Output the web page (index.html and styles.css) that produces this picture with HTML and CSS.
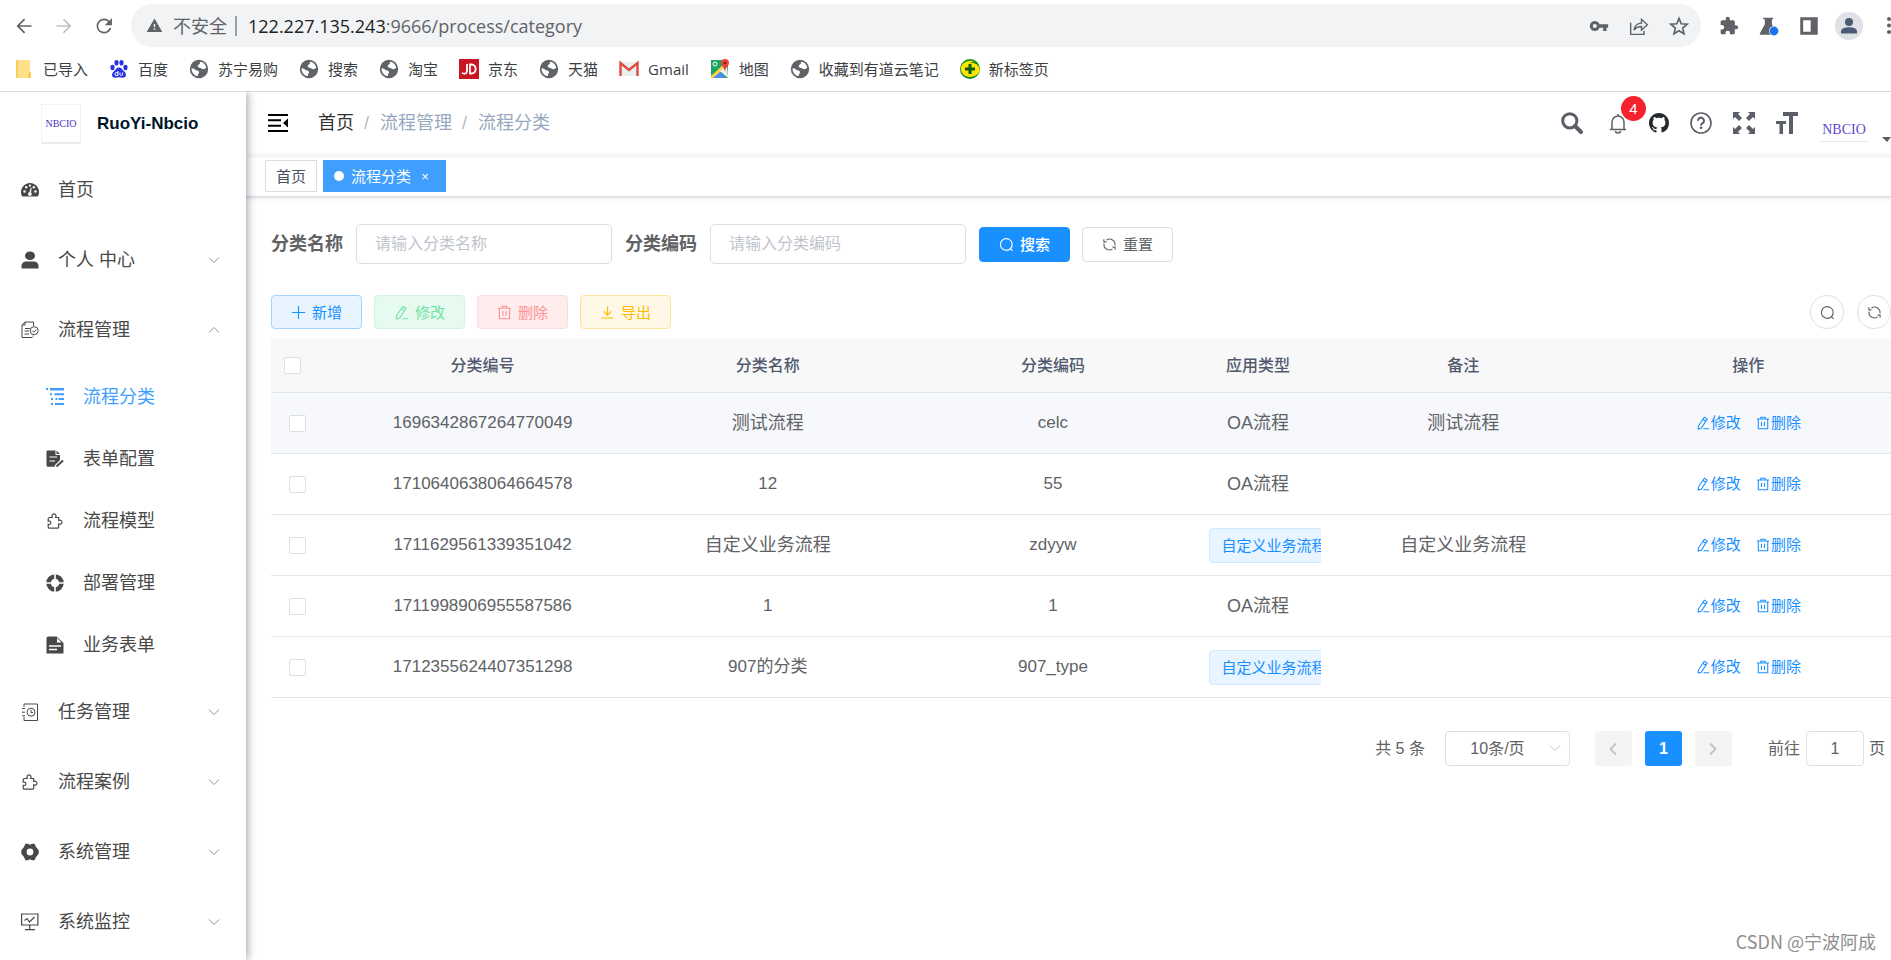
FILE: index.html
```html
<!DOCTYPE html>
<html lang="zh-CN">
<head>
<meta charset="utf-8">
<title>流程分类 - RuoYi-Nbcio</title>
<link rel="stylesheet" href="styles.css">
</head>
<body>
<svg class="sprite" aria-hidden="true">
  <symbol id="i-back" viewBox="0 0 24 24"><path fill="currentColor" d="M21 11H6.8l6.6-6.6L12 3l-9 9 9 9 1.4-1.4L6.800 13H21z"/></symbol>
  <symbol id="i-forward" viewBox="0 0 24 24"><path fill="currentColor" d="M3 11h14.200l-6.600-6.600L12 3l9 9-9 9-1.400-1.400 6.600-6.600H3z"/></symbol>
  <symbol id="i-reload" viewBox="0 0 24 24"><path fill="currentColor" d="M18.400 5.600A9 9 0 1 0 20.800 14.500h-2.200A7 7 0 1 1 17 7l-4 4h8.500V2.500z"/></symbol>
  <symbol id="i-warn" viewBox="0 0 24 24"><path fill="currentColor" d="M1 21h22L12 2zm12-3h-2v-2h2zm0-4h-2v-4h2z"/></symbol>
  <symbol id="i-key" viewBox="0 0 24 24"><path fill="currentColor" d="M12.650 10C11.830 7.670 9.610 6 7 6c-3.310 0-6 2.690-6 6s2.690 6 6 6c2.610 0 4.830-1.670 5.650-4H17v4h4v-4h2v-4zM7 14.500a2.500 2.500 0 1 1 0-5 2.500 2.500 0 0 1 0 5z"/></symbol>
  <symbol id="i-share" viewBox="0 0 24 24"><g fill="none" stroke="currentColor" stroke-width="1.700"><path d="M2 8v14h16v-4"/><path d="M6 17c1-6 4-8.500 9-8.500V4l7 6.500-7 6.500v-4.500c-4 0-6.500 1-9 4.500z"/></g></symbol>
  <symbol id="i-star" viewBox="0 0 24 24"><path fill="none" stroke="currentColor" stroke-width="2" d="M12 2.800l2.700 6.500 7 .6-5.300 4.600 1.600 6.800-6-3.600-6 3.600 1.600-6.800L2.300 9.900l7-.6z"/></symbol>
  <symbol id="i-ext" viewBox="0 0 24 24"><path fill="currentColor" d="M20.500 11H19V7c0-1.100-.9-2-2-2h-4V3.500a2.500 2.500 0 0 0-5 0V5H4c-1.100 0-2 .9-2 2v3.800h1.500a2.700 2.700 0 0 1 0 5.400H2V20c0 1.100.9 2 2 2h3.800v-1.500a2.700 2.700 0 0 1 5.400 0V22H17c1.100 0 2-.9 2-2v-4h1.500a2.500 2.500 0 0 0 0-5z"/></symbol>
  <symbol id="i-flask" viewBox="0 0 24 24"><path fill="currentColor" d="M5 2h12v2h-1.500v6L22 21v1.500H1V21L7 10V4H5z"/><circle cx="18" cy="18" r="6" fill="#fff"/><circle cx="18" cy="18" r="5.300" fill="#1a73e8"/></symbol>
  <symbol id="i-panel" viewBox="0 0 24 24"><path fill="currentColor" fill-rule="evenodd" d="M1.500 1.500h21v21h-21zM5 5v14h9V5z"/></symbol>
  <symbol id="i-globe" viewBox="0 0 24 24"><circle cx="12" cy="12" r="11" fill="#5f6368"/><path fill="#fff" d="M3 11c3 0 4 1 5 2.500 2 0 4 .5 4 2.500 0 1.500-1.500 2-1.500 4.500C6 20 3 16 3 11zM13 3.200c4 .2 7 3.300 7.700 7.300-1.500 1.500-3 2-5 1.500-1-2-4-1-5-2.500-1-2 1-2.500 2-3.500s0-1.500.3-2.800z"/></symbol>

  <symbol id="i-fold" viewBox="0 0 20 18"><path fill="currentColor" d="M0 0h20v2H0zM0 5.300h13v2H0zM0 10.700h13v2H0zM0 16h20v2H0zM20 4.500v9L15 9z"/></symbol>
  <symbol id="i-mag" viewBox="0 0 22 22"><circle cx="8.800" cy="8.800" r="7.100" fill="none" stroke="currentColor" stroke-width="3"/><path d="M14 14l6 6" stroke="currentColor" stroke-width="4" stroke-linecap="round"/></symbol>
  <symbol id="i-bell" viewBox="0 0 20 22"><path fill="none" stroke="currentColor" stroke-width="1.500" d="M2 17.500h16M4 17.500V10a6 6 0 0 1 12 0v7.500M10 4V2M7.500 19a2.500 2 0 0 0 5 0"/></symbol>
  <symbol id="i-github" viewBox="0 0 16 16"><path fill="currentColor" d="M8 0C3.580 0 0 3.580 0 8c0 3.540 2.290 6.530 5.470 7.590.4.070.55-.17.55-.38 0-.19-.01-.82-.01-1.490-2.010.370-2.530-.49-2.690-.94-.09-.23-.48-.94-.82-1.130-.28-.15-.68-.52-.01-.53.63-.01 1.080.58 1.230.82.72 1.210 1.870.87 2.330.66.070-.52.28-.87.51-1.070-1.780-.2-3.640-.89-3.640-3.950 0-.87.31-1.590.82-2.150-.08-.2-.36-1.020.08-2.120 0 0 .67-.21 2.200.82.64-.18 1.320-.27 2-.27s1.360.09 2 .27c1.530-1.040 2.200-.82 2.200-.82.44 1.100.16 1.920.08 2.120.51.560.82 1.270.82 2.150 0 3.070-1.870 3.750-3.650 3.950.29.250.54.730.54 1.480 0 1.070-.01 1.930-.01 2.200 0 .21.15.46.55.38A8 8 0 0 0 16 8c0-4.420-3.580-8-8-8z"/></symbol>
  <symbol id="i-help" viewBox="0 0 22 22"><g fill="none" stroke="currentColor" stroke-width="1.600"><circle cx="11" cy="11" r="10"/><path stroke-width="2" d="M8 8.700a3 3 0 1 1 4.600 2.500c-1.100.7-1.600 1.200-1.600 2.300"/></g><circle cx="11" cy="15.800" r="1.300" fill="currentColor"/></symbol>
  <symbol id="i-full" viewBox="0 0 22 22"><path fill="currentColor" d="M0 0h7L5 2l4 4-3 3-4-4-2 2zM22 0v7l-2-2-4 4-3-3 4-4-2-2zM0 22v-7l2 2 4-4 3 3-4 4 2 2zM22 22h-7l2-2-4-4 3-3 4 4 2-2z"/></symbol>
  <symbol id="i-size" viewBox="0 0 22 22"><path fill="currentColor" d="M7 0h15v4h-5v18h-4V4H7zM0 9h10v3H7v10H3.500V12H0z"/></symbol>

  <symbol id="i-dash" viewBox="0 0 18 18"><path fill="currentColor" d="M9 2a9 9 0 0 0-8.800 11c.3 1.500.7 2.300 1.500 2.500h14.600c.8-.2 1.200-1 1.500-2.500A9 9 0 0 0 9 2z"/><g fill="#fff"><circle cx="3.500" cy="10.500" r="1.200"/><circle cx="5.200" cy="6.300" r="1.200"/><circle cx="9" cy="4.700" r="1.100"/><circle cx="12.800" cy="6.300" r="1.200"/><circle cx="14.500" cy="10.500" r="1.200"/><path d="M9.700 6.800l1 .3-.7 4.500a1.800 1.800 0 1 1-1.500-.3z"/></g></symbol>
  <symbol id="i-user" viewBox="0 0 18 18"><path fill="currentColor" d="M9 .5c3 0 5 1.800 5 4.200S12 9 9 9 4 7.100 4 4.700 6 .5 9 .5zM.5 17.500v-2.500c0-2.500 2-4.500 4.500-4.500h8c2.500 0 4.500 2 4.500 4.500v2.500z"/></symbol>
  <symbol id="i-flow" viewBox="0 0 18 18"><g fill="none" stroke="currentColor"><path d="M12.500 5V1H4L1 4v12.500h10.500M1 4h3V1M4 7.500h5M3.500 10h4.500M3.500 13h4.500"/><circle cx="13.200" cy="9.700" r="4"/><path d="M11.300 9.700l1.500 1.500 2.500-2.700M12 14.500v1"/></g></symbol>
  <symbol id="i-tree" viewBox="0 0 18 18"><path fill="currentColor" d="M0 0h2v2H0zM4 0h14v2.500H4zM4 5.200h2v2H4zM8.500 5.200H18v2H8.500zM5 10h2v2H5zM9.500 10h1.800v2H9.500zM12.500 10H18v2h-5.500zM5 15h2v2H5zM9 15h9v2H9z"/></symbol>
  <symbol id="i-form" viewBox="0 0 18 18"><path fill="currentColor" d="M1.500.5h8V5h4.500v5l-5 5-.5 1.800H2.500c-1.300 0-2-.6-2-1.800V2C.5 1 .8.500 1.500.500zM10.500.5L14 4h-3.500z"/><path stroke="#fff" stroke-width="1.200" d="M3.500 7h7.500M3.500 11h5.500"/><path stroke="currentColor" stroke-width="2" d="M10.500 16.500L17 10.500"/></symbol>
  <symbol id="i-puzzle" viewBox="0 0 18 18"><path fill="none" stroke="currentColor" stroke-width="1.200" d="M3.500 5.500h2.800c-.8-1.500 0-3.700 1.700-3.700s2.500 2.200 1.700 3.700h3v3c1.400-.7 3.300 0 3.300 1.700s-1.900 2.400-3.300 1.700v3c0 .8-.5 1.300-1.300 1.300H3.500c-.8 0-1.300-.5-1.300-1.300v-2.500c1.500.4 2.600-.5 2.600-1.700s-1.100-2-2.600-1.600V6.800c0-.8.5-1.300 1.300-1.300z"/></symbol>
  <symbol id="i-ring" viewBox="0 0 18 18"><circle cx="9" cy="9" r="6.500" fill="none" stroke="currentColor" stroke-width="4.500"/><path stroke="#fff" stroke-width="1.600" d="M9 0v5M9 13v5M0 9h5M13 9h5"/></symbol>
  <symbol id="i-doc" viewBox="0 0 18 18"><path fill="currentColor" d="M2.500.5h8L17.500 7v10.500H.5v-15c0-1.200.8-2 2-2z"/><path fill="#fff" d="M11 2v4.500h4.500z"/><path stroke="#fff" stroke-width="1.500" d="M3 10h12M3 13.500h8"/></symbol>
  <symbol id="i-task" viewBox="0 0 18 18"><g fill="none" stroke="currentColor"><path d="M3 4V1h13.500v16.500H3V14M1 5.500h3M1 9.200h3M1 12.800h3"/><circle cx="10" cy="9.200" r="4"/><path d="M10 7v2.500h2"/></g></symbol>
  <symbol id="i-gear" viewBox="0 0 18 18"><path fill="currentColor" fill-rule="evenodd" d="M4.500.8h2.200L9 1.800l2.300-1h2.200l1.700 3.400 2.500 3v3.600l-2.500 3-1.700 3.400h-2.200l-2.300-1-2.300 1H4.500l-1.700-3.400-2.500-3V7.200l2.500-3zM9 5.600a3.400 3.400 0 1 0 0 6.800 3.400 3.400 0 0 0 0-6.800z"/></symbol>
  <symbol id="i-monitor" viewBox="0 0 18 18"><path fill="none" stroke="currentColor" stroke-width="1.200" d="M.6 1h16.300v11H.6zM8.700 12v4.500M4 16.700h10M3.500 7.500l2.500-2 2.500 3.500 5-5"/></symbol>
  <symbol id="i-down" viewBox="0 0 12 12"><path fill="none" stroke="currentColor" d="M1 3.500l5 5 5-5"/></symbol>
  <symbol id="i-up" viewBox="0 0 12 12"><path fill="none" stroke="currentColor" d="M1 8.500l5-5 5 5"/></symbol>

  <symbol id="i-search" viewBox="0 0 16 16"><path fill="none" stroke="currentColor" stroke-width="1.200" d="M12.200 12.500A6.300 6.300 0 1 0 8 14.300c1.700 0 3.200-.6 4.200-1.800zM12.200 12.500l2.300 2.300"/></symbol>
  <symbol id="i-refresh" viewBox="0 0 16 16"><g fill="none" stroke="currentColor" stroke-width="1.200"><path d="M4.800 3.200A5.800 5.800 0 0 1 13.800 9M11.200 12.800A5.800 5.800 0 0 1 2.200 7"/><path d="M4.800 5.200H2V2.500M11.200 10.800H14v2.700"/></g></symbol>
  <symbol id="i-plus" viewBox="0 0 16 16"><path stroke="currentColor" stroke-width="1.200" d="M8 1v14M1 8h14"/></symbol>
  <symbol id="i-edit" viewBox="0 0 16 16"><path fill="none" stroke="currentColor" stroke-width="1.200" d="M9.500 1.500l3.300 2L6 14l-3.500 1 .2-3.500zM8 4l3.300 2M8.500 14.600H15"/></symbol>
  <symbol id="i-trash" viewBox="0 0 16 16"><path fill="none" stroke="currentColor" stroke-width="1.200" d="M1 3.500h14M5.500 3.500v-2h5v2M2.600 3.500v11.100h10.800V3.500M6.300 6.500v5M9.700 6.500v5"/></symbol>
  <symbol id="i-export" viewBox="0 0 16 16"><path fill="none" stroke="currentColor" stroke-width="1.200" d="M8 1.500v9M4 6.800l4 4 4-4M1.500 13.800h13"/></symbol>
  <symbol id="i-left" viewBox="0 0 12 16"><path fill="none" stroke="currentColor" stroke-width="2" d="M9 2.500L3.500 8 9 13.500"/></symbol>
  <symbol id="i-right" viewBox="0 0 12 16"><path fill="none" stroke="currentColor" stroke-width="2" d="M3 2.500L8.500 8 3 13.500"/></symbol>
</svg>

<header class="browser">
  <div class="toolbar">
    <button class="tool" aria-label="后退"><svg><use href="#i-back"/></svg></button>
    <button class="tool tool-off" aria-label="前进"><svg><use href="#i-forward"/></svg></button>
    <button class="tool" aria-label="刷新"><svg><use href="#i-reload"/></svg></button>
    <div class="omnibox">
      <svg class="warn"><use href="#i-warn"/></svg>
      <span class="insecure">不安全</span>
      <span class="sep"></span>
      <span class="url"><b>122.227.135.243</b>:9666/process/category</span>
      <button class="tool" aria-label="密码"><svg><use href="#i-key"/></svg></button>
      <button class="tool" aria-label="分享"><svg><use href="#i-share"/></svg></button>
      <button class="tool" aria-label="收藏"><svg><use href="#i-star"/></svg></button>
    </div>
    <div class="tools">
      <button class="tool" aria-label="扩展程序"><svg><use href="#i-ext"/></svg></button>
      <button class="tool" aria-label="实验"><svg><use href="#i-flask"/></svg></button>
      <button class="tool" aria-label="侧边栏"><svg><use href="#i-panel"/></svg></button>
    </div>
    <button class="profile" aria-label="个人资料"><svg viewBox="0 0 28 28"><circle cx="14" cy="14" r="14" fill="#dee1e6"/><circle cx="14" cy="10" r="4" fill="#4a5a73"/><path fill="#4a5a73" d="M6 21.500v-2c0-3 4-4.300 8-4.300s8 1.300 8 4.300v2z"/></svg></button>
    <button class="more" aria-label="更多"><svg viewBox="0 0 6 18"><g fill="#5f6368"><circle cx="4" cy="2" r="2"/><circle cx="4" cy="8.500" r="2"/><circle cx="4" cy="15" r="2"/></g></svg></button>
  </div>
  <nav class="bookmarks" aria-label="书签">
    <a href="#"><svg viewBox="0 0 20 20"><path fill="#ffe08a" d="M2 1h14v18H2z"/><path fill="#f8cf5c" d="M2 1h2v18H2zM14 13h3v6h-3z"/></svg>已导入</a>
    <a href="#"><svg viewBox="0 0 20 20"><g fill="#2932e1"><ellipse cx="3.500" cy="8.500" rx="2.100" ry="2.700"/><ellipse cx="7.500" cy="3.800" rx="2.100" ry="2.800"/><ellipse cx="12.500" cy="3.800" rx="2.100" ry="2.800"/><ellipse cx="16.500" cy="8.500" rx="2.100" ry="2.700"/><path d="M10 8.500c2.500 0 3 2 5 3.800s2.500 3.500 1.500 5.200c-1.500 2-4 .8-6.500.8s-5 1.200-6.500-.8c-1-1.700-.5-3.400 1.500-5.200s2.500-3.800 5-3.800z"/></g><path fill="none" stroke="#fff" d="M9 12v4.500H7.200c-1.800 0-1.800-2.800 0-2.800H9M11 13.500v2.200c0 1 2.500 1 2.500 0v-2.200"/></svg>百度</a>
    <a href="#"><svg><use href="#i-globe"/></svg>苏宁易购</a>
    <a href="#"><svg><use href="#i-globe"/></svg>搜索</a>
    <a href="#"><svg><use href="#i-globe"/></svg>淘宝</a>
    <a href="#"><svg viewBox="0 0 20 20"><path fill="#c91623" d="M0 0h20v20H0z"/><path fill="none" stroke="#fff" stroke-width="1.800" d="M3 14c3 1.500 5 .5 5-2V5M11 5.500h1.500c5.500 0 5.500 9 0 9H11z"/></svg>京东</a>
    <a href="#"><svg><use href="#i-globe"/></svg>天猫</a>
    <a href="#"><svg viewBox="0 0 20 20"><path fill="#eceff1" d="M1 3h18v14H1z"/><path fill="none" stroke="#e04a3f" stroke-width="2.400" d="M1.500 17V4l8.500 7 8.500-7v13"/></svg>Gmail</a>
    <a href="#"><svg viewBox="0 0 20 20"><path fill="#1fa463" d="M1 1h17v18H1z"/><path fill="#ffd04b" d="M1 17L14 5l3 3L4 19H1z"/><path fill="#f2f2f2" d="M10 12l7-6 1 13z"/><path fill="#4c8bf5" d="M3 19l7-6 6 6z"/><path fill="#ea4335" d="M15 0a4 4 0 0 1 4 4c0 3-3.500 4-4 9-.5-5-4-6-4-9a4 4 0 0 1 4-4z"/><circle cx="15" cy="4" r="1.300" fill="#7b1a12"/><circle cx="5" cy="5" r="2" fill="none" stroke="#fff"/></svg>地图</a>
    <a href="#"><svg><use href="#i-globe"/></svg>收藏到有道云笔记</a>
    <a href="#"><svg viewBox="0 0 20 20"><circle cx="10" cy="10" r="10" fill="#128a1c"/><path fill="#ffe500" d="M1 8C3 3 9 .5 15 2.500c-3 0-4 .5-5 1.500 5-1 10 3 9.800 7.500C19 15 15 18 10 18 5 18 0 14 1 8z"/><path stroke="#0b5c12" stroke-width="3" d="M10 5v10M5 10h10"/></svg>新标签页</a>
  </nav>
</header>

<div class="app">
  <aside class="sidebar">
    <a class="brand" href="#"><span class="brand-logo">NBCIO</span><span class="brand-name">RuoYi-Nbcio</span></a>
    <ul class="menu">
      <li><a class="item" href="#"><svg><use href="#i-dash"/></svg>首页</a></li>
      <li><button class="item"><svg><use href="#i-user"/></svg>个人 中心<svg class="arrow"><use href="#i-down"/></svg></button></li>
      <li><button class="item"><svg><use href="#i-flow"/></svg>流程管理<svg class="arrow"><use href="#i-up"/></svg></button>
        <ul class="submenu">
          <li><a class="item active" href="#"><svg><use href="#i-tree"/></svg>流程分类</a></li>
          <li><a class="item" href="#"><svg><use href="#i-form"/></svg>表单配置</a></li>
          <li><a class="item" href="#"><svg><use href="#i-puzzle"/></svg>流程模型</a></li>
          <li><a class="item" href="#"><svg><use href="#i-ring"/></svg>部署管理</a></li>
          <li><a class="item" href="#"><svg><use href="#i-doc"/></svg>业务表单</a></li>
        </ul>
      </li>
      <li><button class="item"><svg><use href="#i-task"/></svg>任务管理<svg class="arrow"><use href="#i-down"/></svg></button></li>
      <li><button class="item"><svg><use href="#i-puzzle"/></svg>流程案例<svg class="arrow"><use href="#i-down"/></svg></button></li>
      <li><button class="item"><svg><use href="#i-gear"/></svg>系统管理<svg class="arrow"><use href="#i-down"/></svg></button></li>
      <li><button class="item"><svg><use href="#i-monitor"/></svg>系统监控<svg class="arrow"><use href="#i-down"/></svg></button></li>
    </ul>
  </aside>

  <div class="main">
    <div class="navbar">
      <button class="fold" aria-label="折叠菜单"><svg><use href="#i-fold"/></svg></button>
      <nav class="crumbs" aria-label="面包屑"><a href="#">首页</a><i>/</i><span>流程管理</span><i>/</i><span>流程分类</span></nav>
      <div class="nav-tools">
        <button aria-label="搜索"><svg><use href="#i-mag"/></svg></button>
        <button class="bell" aria-label="通知"><svg><use href="#i-bell"/></svg><span class="badge">4</span></button>
        <button class="github" aria-label="GitHub"><svg><use href="#i-github"/></svg></button>
        <button aria-label="帮助"><svg><use href="#i-help"/></svg></button>
        <button aria-label="全屏"><svg><use href="#i-full"/></svg></button>
        <button aria-label="布局大小"><svg><use href="#i-size"/></svg></button>
        <button class="account" aria-label="账户"><span class="avatar">NBCIO</span><span class="caret"></span></button>
      </div>
    </div>
    <div class="tags">
      <a class="tab" href="#">首页</a>
      <a class="tab tab-active" href="#"><span class="dot"></span>流程分类<span class="close">×</span></a>
    </div>

    <main class="content">
      <form class="query">
        <label for="name">分类名称</label>
        <input id="name" type="text" placeholder="请输入分类名称">
        <label for="code">分类编码</label>
        <input id="code" type="text" placeholder="请输入分类编码">
        <button type="button" class="btn btn-solid"><svg><use href="#i-search"/></svg>搜索</button>
        <button type="button" class="btn"><svg><use href="#i-refresh"/></svg>重置</button>
      </form>
      <div class="actions">
        <button class="btn btn-primary"><svg><use href="#i-plus"/></svg>新增</button>
        <button class="btn btn-success"><svg><use href="#i-edit"/></svg>修改</button>
        <button class="btn btn-danger"><svg><use href="#i-trash"/></svg>删除</button>
        <button class="btn btn-warning"><svg><use href="#i-export"/></svg>导出</button>
        <div class="rounds">
          <button class="round" aria-label="显示搜索"><svg><use href="#i-search"/></svg></button>
          <button class="round" aria-label="刷新"><svg><use href="#i-refresh"/></svg></button>
        </div>
      </div>
      <table class="grid">
        <colgroup><col class="c-check"><col><col><col><col class="c-type"><col><col></colgroup>
        <thead>
          <tr><th><input type="checkbox" aria-label="全选"></th><th>分类编号</th><th>分类名称</th><th>分类编码</th><th>应用类型</th><th>备注</th><th>操作</th></tr>
        </thead>
        <tbody>
          <tr class="hover"><td><input type="checkbox" aria-label="选择"></td><td class="num">1696342867264770049</td><td>测试流程</td><td class="num">celc</td><td>OA流程</td><td>测试流程</td><td><div class="ops"><button><svg><use href="#i-edit"/></svg>修改</button><button><svg><use href="#i-trash"/></svg>删除</button></div></td></tr>
          <tr><td><input type="checkbox" aria-label="选择"></td><td class="num">1710640638064664578</td><td class="num">12</td><td class="num">55</td><td>OA流程</td><td></td><td><div class="ops"><button><svg><use href="#i-edit"/></svg>修改</button><button><svg><use href="#i-trash"/></svg>删除</button></div></td></tr>
          <tr><td><input type="checkbox" aria-label="选择"></td><td class="num">1711629561339351042</td><td>自定义业务流程</td><td class="num">zdyyw</td><td><span class="pill">自定义业务流程</span></td><td>自定义业务流程</td><td><div class="ops"><button><svg><use href="#i-edit"/></svg>修改</button><button><svg><use href="#i-trash"/></svg>删除</button></div></td></tr>
          <tr><td><input type="checkbox" aria-label="选择"></td><td class="num">1711998906955587586</td><td class="num">1</td><td class="num">1</td><td>OA流程</td><td></td><td><div class="ops"><button><svg><use href="#i-edit"/></svg>修改</button><button><svg><use href="#i-trash"/></svg>删除</button></div></td></tr>
          <tr><td><input type="checkbox" aria-label="选择"></td><td class="num">1712355624407351298</td><td class="num">907的分类</td><td class="num">907_type</td><td><span class="pill">自定义业务流程</span></td><td></td><td><div class="ops"><button><svg><use href="#i-edit"/></svg>修改</button><button><svg><use href="#i-trash"/></svg>删除</button></div></td></tr>
        </tbody>
      </table>
      <div class="pager">
        <span>共 5 条</span>
        <span class="size"><select aria-label="每页条数"><option>10条/页</option></select><svg><use href="#i-down"/></svg></span>
        <div class="pages">
          <button aria-label="上一页"><svg><use href="#i-left"/></svg></button>
          <button class="current">1</button>
          <button aria-label="下一页"><svg><use href="#i-right"/></svg></button>
        </div>
        <label class="jump">前往<input type="text" value="1">页</label>
      </div>
    </main>
  </div>
  <div class="watermark">CSDN @宁波阿成</div>
</div>
</body>
</html>
```
FILE: styles.css
```css
* { box-sizing: border-box; }

body {
  margin: 0;
  min-height: 100vh;
  display: flex;
  flex-direction: column;
  overflow: hidden;
  background: #fff;
  color: #606266;
  font-family: "Liberation Sans", "Noto Sans CJK SC", sans-serif;
  font-size: 16px;
  line-height: 1;
}

button, input, select { font: inherit; color: inherit; }
button { padding: 0; border: 0; background: none; cursor: pointer; }
a { color: inherit; text-decoration: none; }
ul { margin: 0; padding: 0; list-style: none; }
svg { display: block; flex: none; }
.sprite { position: absolute; width: 0; height: 0; }

/* Browser toolbar */
.browser {
  font-family: "Open Sans", "Noto Sans CJK SC", sans-serif;
  color: #3c4043;
  border-bottom: 1px solid #dadce0;
}
.toolbar {
  display: flex;
  align-items: center;
  gap: 20px;
  padding: 4px 0 0 14px;
}
.tool { color: #5f6368; }
.tool svg { width: 20px; height: 20px; }
.tool-off { color: #bdc1c6; }
.omnibox {
  flex: 1;
  display: flex;
  align-items: center;
  gap: 20px;
  height: 43px;
  margin: 0 -2px 0 -3px;
  padding: 0 12px 0 15px;
  border-radius: 22px;
  background: #f1f3f4;
  color: #5f6368;
  font-size: 18px;
}
.warn { width: 17px; height: 17px; }
.insecure { margin-left: -10px; }
.sep { width: 2px; height: 20px; margin: 0 -9px 0 -12px; background: #9aa0a6; }
.url { flex: 1; }
.url b { font-weight: 400; color: #202124; }
.tools { display: flex; gap: 20px; }
.profile { margin: 0 2px 0 -4px; }
.profile svg { width: 28px; height: 28px; }
.more svg { width: 6px; height: 18px; }

.bookmarks {
  display: flex;
  align-items: center;
  gap: 21px;
  height: 44px;
  padding-left: 14px;
  font-size: 15px;
  white-space: nowrap;
}
.bookmarks a { display: flex; align-items: center; gap: 9px; }
.bookmarks svg { width: 20px; height: 20px; }

/* Application shell */
.app { flex: 1; display: flex; position: relative; }
.sidebar {
  flex: none;
  width: 246px;
  z-index: 2;
  background: #fff;
  box-shadow: 2px 0 8px rgba(0, 21, 41, .35);
  clip-path: inset(0 -12px 0 0);
}
.main { flex: 1; min-width: 0; }

.brand {
  display: flex;
  align-items: center;
  gap: 16px;
  height: 63px;
  padding-left: 41px;
}
.brand-logo {
  display: grid;
  place-items: center;
  width: 40px;
  height: 40px;
  border: 1px solid #f3f3f7;
  border-bottom: 2px solid #e9e9ee;
  color: #4733c0;
  font: 10px "Liberation Serif", serif;
}
.brand-name { color: #001529; font-size: 17px; font-weight: 700; }

.item {
  display: flex;
  align-items: center;
  gap: 19px;
  width: 100%;
  height: 70px;
  padding: 0 26px 0 21px;
  color: #484848;
  font-size: 18px;
  text-align: left;
}
.item svg { width: 18px; height: 18px; }
.item .arrow { width: 12px; height: 12px; margin-left: auto; color: #909399; }
.submenu { padding: 1px 0; }
.submenu .item { height: 62px; padding-left: 46px; }
.item.active { color: #409eff; }

/* Top bar */
.navbar {
  display: flex;
  align-items: center;
  height: 63px;
  padding: 0 0 2px 22px;
  box-shadow: 0 1px 4px rgba(0, 21, 41, .08);
}
.fold { color: #000; }
.fold svg { width: 20px; height: 18px; }
.crumbs { display: flex; margin-left: 30px; font-size: 18px; color: #97a8be; }
.crumbs a { color: #303133; }
.crumbs i { margin: 0 11px 0 10px; font-style: normal; color: #b4bac6; }

.nav-tools {
  display: flex;
  align-items: center;
  gap: 21px;
  margin-left: auto;
  color: #5a5e66;
}
.nav-tools svg { width: 22px; height: 22px; }
.nav-tools .bell { position: relative; margin-left: 4px; }
.nav-tools .bell svg { width: 20px; }
.nav-tools .github { color: #24292e; }
.nav-tools .github svg { width: 20px; height: 20px; }
.badge {
  position: absolute;
  top: -16px;
  left: 13px;
  width: 25px;
  height: 25px;
  border-radius: 50%;
  background: #f5222d;
  color: #fff;
  font-size: 15px;
  line-height: 25px;
}
.account { display: flex; align-items: flex-end; gap: 13px; padding-top: 16px; }
.avatar {
  width: 50px;
  border-bottom: 1px solid #e8e8ec;
  color: #6547d2;
  font: 14px/22px "Liberation Serif", serif;
}
.caret {
  border: 5px solid transparent;
  border-width: 5px 4px 0 5px;
  border-top-color: #5a5e66;
}

.tags {
  display: flex;
  gap: 6px;
  height: 42px;
  padding: 5px 19px;
  border-bottom: 1px solid #d8dce5;
  box-shadow: 0 1px 4px rgba(0, 0, 0, .14);
}
.tab {
  display: flex;
  align-items: center;
  height: 32px;
  padding: 0 10px;
  border: 1px solid #d8dce5;
  color: #495060;
  font-size: 15px;
}
.tab-active { border-color: #409eff; background: #409eff; color: #fff; }
.dot { width: 10px; height: 10px; margin-right: 7px; border-radius: 50%; background: #fff; }
.close { width: 20px; margin-left: 4px; text-align: center; font-size: 13px; }

/* Content */
.content { padding: 27px 0 0 25px; }
.query { display: flex; align-items: center; gap: 13px; }
.query label { font-size: 18px; font-weight: 700; }
.query input {
  width: 256px;
  height: 40px;
  padding: 0 18px;
  border: 1px solid #dcdfe6;
  border-radius: 5px;
}
.query input::placeholder { color: #c0c4cc; opacity: 1; }

.btn {
  display: flex;
  align-items: center;
  gap: 6px;
  height: 34px;
  padding: 0 19px;
  border: 1px solid #dcdfe6;
  border-radius: 4px;
  font-size: 15px;
}
.btn svg { width: 15px; height: 15px; }
.query .btn { height: 35px; }
.query .btn + .btn { margin-left: -1px; }
.btn-solid { border-color: #1890ff; background: #1890ff; color: #fff; font-weight: 500; }
.btn-primary { border-color: #a3d3ff; background: #e8f4ff; color: #1890ff; }
.btn-success { border-color: #d0f5e0; background: #e7faf0; color: #71e2a3; }
.btn-danger { border-color: #ffdbdb; background: #ffeded; color: #ff9292; }
.btn-warning { border-color: #ffe399; background: #fff8e6; color: #ffba00; }

.actions { display: flex; gap: 12px; margin: 31px 0 10px; }
.rounds { display: flex; gap: 13px; margin-left: auto; }
.round {
  display: grid;
  place-items: center;
  width: 34px;
  height: 34px;
  border: 1px solid #dcdfe6;
  border-radius: 50%;
}
.round svg { width: 15px; height: 15px; }

.grid { width: 100%; table-layout: fixed; border-collapse: separate; border-spacing: 0; }
.c-check { width: 69px; }
.c-type { width: 125px; }
.grid th {
  height: 54px;
  padding: 0 13px;
  border-bottom: 1px solid #dfe6ec;
  background: #f8f8f9;
  color: #515a6e;
  font-size: 16px;
  font-weight: 500;
}
.grid td {
  height: 61px;
  padding: 12px 13px;
  border-bottom: 1px solid #dfe6ec;
  font-size: 18px;
  line-height: 28px;
  text-align: center;
  white-space: nowrap;
  overflow: hidden;
}
.grid .num { font-size: 17px; }
.grid .hover td { background: #f6f8fc; }
.grid th:first-child { text-align: left; }
.grid td:first-child { padding-left: 18px; text-align: left; }
.grid input {
  display: block;
  appearance: none;
  width: 17px;
  height: 17px;
  margin: 0;
  border: 1px solid #dcdfe6;
  border-radius: 2px;
  background: #fff;
}
.pill {
  display: block;
  width: max-content;
  padding: 0 12px;
  border: 1px solid #d1e9ff;
  border-radius: 4px;
  background: #e8f4ff;
  color: #1890ff;
  font-size: 15px;
  line-height: 33px;
}
.ops { display: flex; justify-content: center; gap: 15px; color: #1890ff; font-size: 15px; }
.ops button { display: flex; align-items: center; }
.ops svg { width: 14px; height: 14px; margin-right: 1px; }

.pager {
  display: flex;
  align-items: center;
  justify-content: flex-end;
  padding: 33px 6px 0 0;
}
.size { position: relative; margin: 0 25px 0 20px; }
.size select {
  display: block;
  appearance: none;
  width: 125px;
  height: 35px;
  padding: 0 38px 0 18px;
  border: 1px solid #dcdfe6;
  border-radius: 4px;
  background: #fff;
  text-align: center;
}
.size svg { position: absolute; right: 9px; top: 11px; width: 12px; height: 12px; color: #c0c4cc; }
.pages { display: flex; gap: 13px; }
.pages button {
  display: grid;
  place-items: center;
  width: 37px;
  height: 35px;
  border-radius: 3px;
  background: #f4f4f5;
  color: #c0c4cc;
}
.pages svg { width: 12px; height: 16px; }
.pages .current { background: #1890ff; color: #fff; font-weight: 700; }
.jump { display: flex; align-items: center; margin-left: 36px; }
.jump input {
  width: 58px;
  height: 35px;
  margin: 0 5px 0 6px;
  border: 1px solid #dcdfe6;
  border-radius: 4px;
  text-align: center;
}

.watermark {
  position: absolute;
  right: 15px;
  bottom: 6px;
  color: #8e8e8e;
  font: 18px "Noto Sans CJK SC", sans-serif;
}
```
